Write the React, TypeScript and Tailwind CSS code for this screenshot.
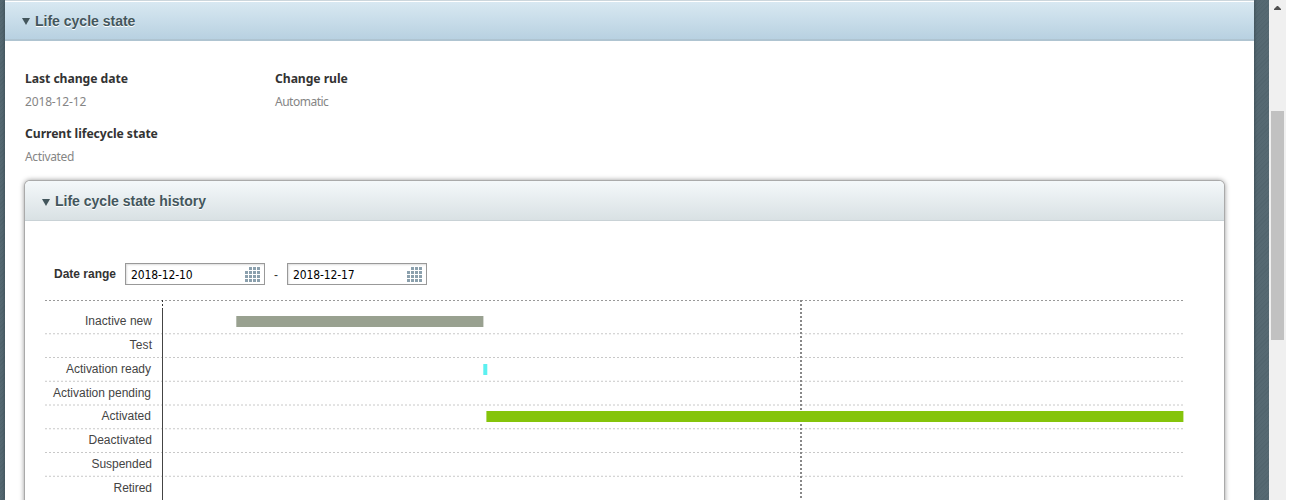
import React from "react";

const states = [
  { name: "Inactive new", x: 152, y: 325, w: 67 },
  { name: "Test", x: 152, y: 349, w: 22.5 },
  { name: "Activation ready", x: 151, y: 373, w: 85 },
  { name: "Activation pending", x: 151, y: 397, w: 98 },
  { name: "Activated", x: 151, y: 420, w: 49.5 },
  { name: "Deactivated", x: 152, y: 444, w: 63.5 },
  { name: "Suspended", x: 152, y: 468, w: 60.5 },
  { name: "Retired", x: 152, y: 492, w: 38.5 },
];
const rows = [33.75, 57.5, 81.25, 105, 128.75, 152.5, 176.25];

function Title({ children }: { children: string }) {
  return (
    <>
      <svg width="8" height="7" className="mr-[5px] mt-px shrink-0">
        <path d="M0 0H8L4 7Z" fill="#43565c" />
      </svg>
      <span>{children}</span>
    </>
  );
}

function Field({ label, value, tracking = "tracking-[-0.4px]" }: { label: string; value: string; tracking?: string }) {
  return (
    <div className="h-[55px] w-[250px]">
      <div className="text-[12.2px] leading-4 font-bold tracking-[-0.06px] text-[#333]">{label}</div>
      <div className={`mt-[7px] text-[12px] leading-4 text-[#858585] ${tracking}`}>{value}</div>
    </div>
  );
}

function DateInput({ value }: { value: string }) {
  return (
    <div className="flex h-[22px] w-[140px] items-center justify-between border border-[#999] bg-white pr-1 pl-[5px] shadow-[inset_1px_1px_2px_#ddd]">
      <span className="pt-[2px] font-['DejaVu_Sans_Condensed','DejaVu_Sans',sans-serif] text-[12px] font-stretch-condensed tracking-[-0.13px] text-black">{value}</span>
      <svg width="15" height="15" fill="#8ba0ad">
        {[0, 4, 8, 12].map((y) =>
          [0, 4, 8, 12].map((x) => (x + y === 0 ? null : <rect key={x + "-" + y} x={x} y={y} width="3" height="3" />))
        )}
      </svg>
    </div>
  );
}

export default function App() {
  return (
    <div className="flex h-[500px] w-[1300px] overflow-hidden bg-white font-['Noto_Sans',sans-serif]">
      <div className="flex h-full w-[1269px] shrink-0 bg-[#53666f] bg-[repeating-linear-gradient(135deg,#52656e_0px,#52656e_1px,#566972_1px,#566972_3px)] pl-[5px]">
        <main className="h-full w-[1249px] bg-white shadow-[0_0_4px_#33454d]">
          <header className="flex h-[41px] items-center border-t border-b-2 border-t-[#ccd6dc] border-b-[#afc4d1] bg-linear-to-b from-[#d9e9f2] to-[#b8d1e1] pt-[2px] pl-[17px] font-['Liberation_Sans',sans-serif] text-[14px] font-bold text-[#43565c] shadow-[inset_0_1px_white] [text-shadow:0_1px_white]">
            <Title>Life cycle state</Title>
          </header>
          <div className="flex flex-wrap pt-[30px] pl-5">
            <Field label="Last change date" value="2018-12-12" tracking="tracking-[-0.15px]" />
            <Field label="Change rule" value="Automatic" tracking="tracking-[-0.5px]" />
            <div className="w-full" />
            <Field label="Current lifecycle state" value="Activated" tracking="tracking-[-0.35px]" />
          </div>
          <section className="ml-5 h-[330px] w-[1199px] rounded-t-[5px] bg-white shadow-[0_0_0_1px_#aaa,0_0_5px_1px_#999]">
            <header className="flex h-10 items-center rounded-t-[5px] border-b border-[#c9d2d6] bg-linear-to-b from-[#f4f8fa] to-[#d9e1e4] pt-[2px] pl-[17px] font-['Liberation_Sans',sans-serif] text-[14px] font-bold text-[#43565c] [text-shadow:0_1px_white]">
              <Title>Life cycle state history</Title>
            </header>
            <div className="mt-[42px] flex h-[22px] items-center pl-[29px] font-['Liberation_Sans',sans-serif] text-[12px] text-[#333]">
              <span className="w-[71px] font-bold">Date range</span>
              <DateInput value="2018-12-10" />
              <span className="w-[22px] pt-px text-center">-</span>
              <DateInput value="2018-12-17" />
            </div>
            <svg className="mt-[15px] ml-5" width="1140" height="200" viewBox="45 300 1140 200">
              <g strokeDasharray="2 2">
                <path d="M45 300.5H1183" stroke="#999" />
                {rows.map((y) => (
                  <path key={y} d={`M45 ${300 + y}H1183`} stroke="#c8c8c8" />
                ))}
                <path d="M162.5 300V309" stroke="#333" />
                <path d="M801 300V500" stroke="#888" strokeWidth="2" />
              </g>
              <path d="M162.5 309V500" stroke="#444" />
              <rect x="236.3" y="316" width="247.1" height="11" fill="#99a190" />
              <rect x="483.3" y="364" width="4" height="11" fill="#5cf0f0" />
              <rect x="486.4" y="411" width="697" height="11" fill="#85c40b" />
              <g fill="#444" textAnchor="end" fontFamily="Liberation Sans, sans-serif" fontSize="12">
                {states.map((s) => (
                  <text key={s.name} x={s.x} y={s.y} textLength={s.w}>{s.name}</text>
                ))}
              </g>
            </svg>
          </section>
        </main>
      </div>
      <aside className="flex h-full w-[17px] flex-col items-start bg-[#f0f0f0] pl-[2px]">
        <svg width="13" height="111" className="shrink-0">
          <path d="M3 10V9L6 6H7L10 9V10Z" fill="#505050" />
        </svg>
        <div className="h-[229px] w-[13px] bg-[#c1c1c1]" />
      </aside>
    </div>
  );
}
